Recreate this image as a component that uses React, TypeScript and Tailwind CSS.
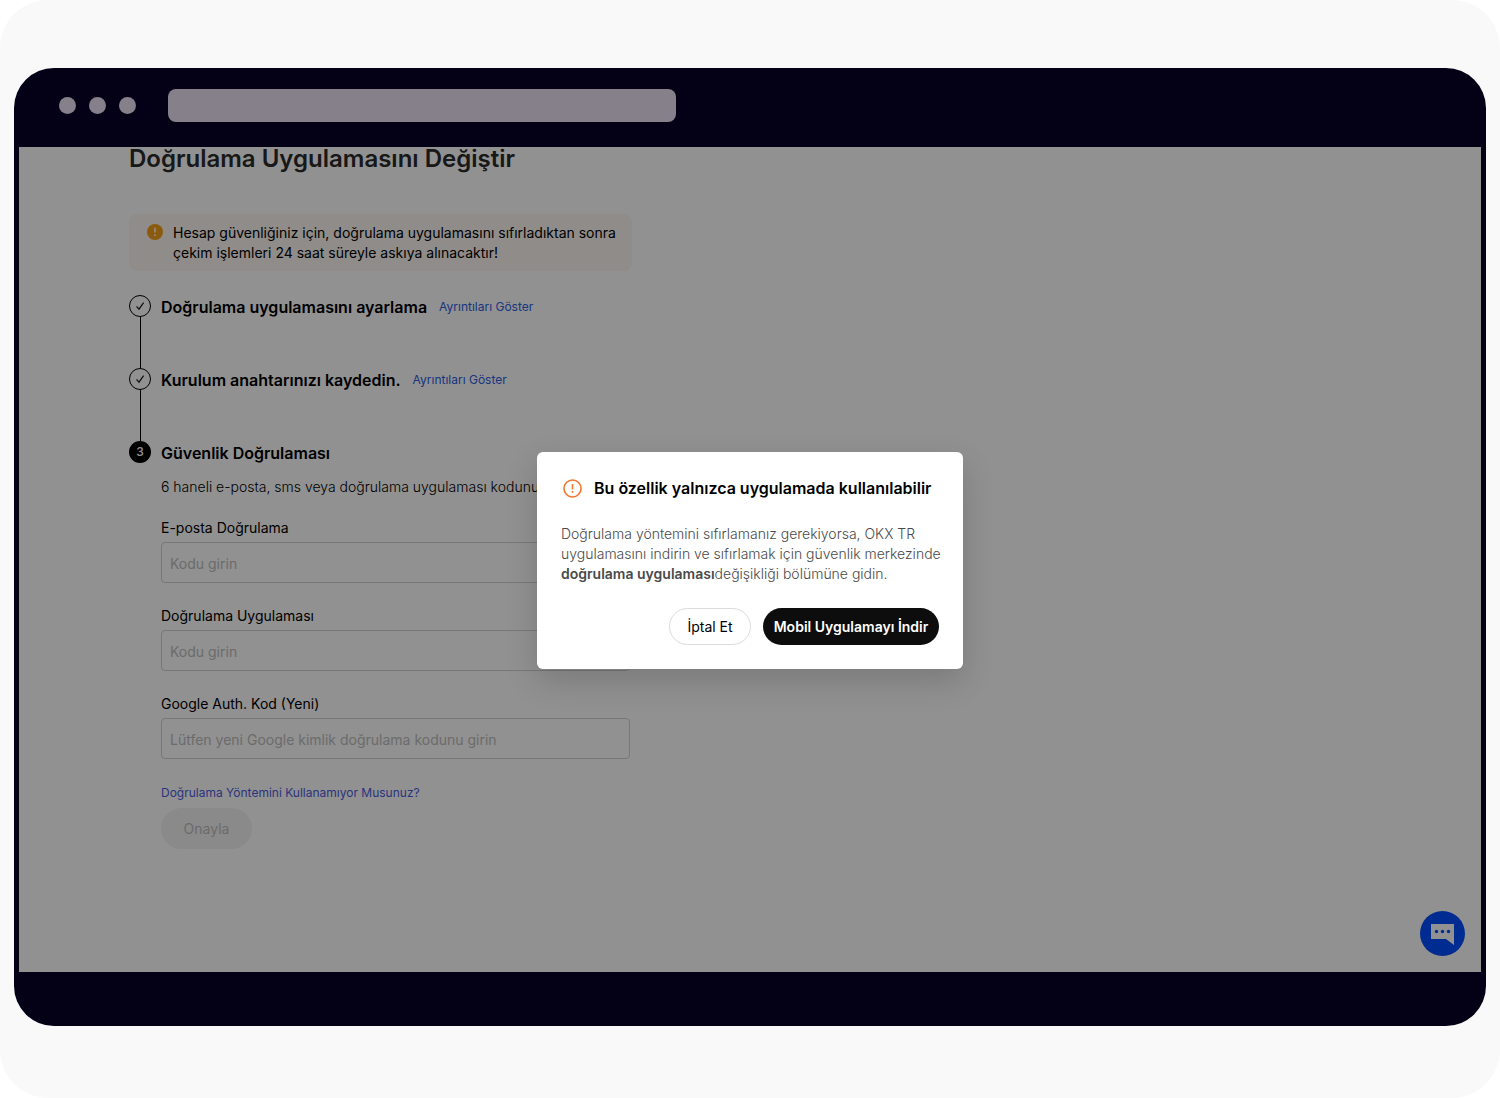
import React, { ReactNode } from "react";

interface StepProps {
    marker: ReactNode;
    title: string;
    action?: string;
    last?: boolean;
    children?: ReactNode;
}

interface FieldProps {
    id: string;
    label: string;
    placeholder: string;
}

const CheckMarker = () => (
    <span className="flex size-[22px] items-center justify-center rounded-full border border-black">
        <svg className="size-2.5" viewBox="0 0 10 10" fill="none" stroke="#1a1a1a" strokeWidth="1.2">
            <path d="M1.5 5.4 4 8.2 8.6 1.6" />
        </svg>
    </span>
);

const NumberMarker = ({ value }: { value: number }) => (
    <span className="flex size-[22px] items-center justify-center rounded-full bg-black text-xs font-medium text-white">
        {value}
    </span>
);

const Step = ({ marker, title, action, last, children }: StepProps) => (
    <li className={"flex gap-2.5 " + (last ? "" : "h-[73px]")}>
        <div className="flex flex-col items-center">
            {marker}
            {!last && <span className="w-px flex-1 bg-black" />}
        </div>
        <div className="flex-1">
            <div className="flex h-6 items-center gap-3">
                <h2 className="text-base font-semibold text-black">{title}</h2>
                {action && (
                    <a href="#" className="text-xs text-[#2d60e0]">
                        {action}
                    </a>
                )}
            </div>
            {children}
        </div>
    </li>
);

const Field = ({ id, label, placeholder }: FieldProps) => (
    <div className="mb-[23px] flex flex-col gap-1">
        <label htmlFor={id} className="text-sm leading-5 text-black">
            {label}
        </label>
        <input
            id={id}
            type="text"
            placeholder={placeholder}
            className="h-[41px] w-full rounded border border-[#d2d2d2] px-2 pt-0.5 text-sm placeholder:text-[#bdbdbd]"
        />
    </div>
);

const Modal = () => (
    <div className="absolute inset-0 flex items-center justify-center bg-black/43">
        <section
            role="dialog"
            aria-labelledby="modal-title"
            className="mt-0.5 w-[426px] rounded-md bg-white p-6 shadow-[0_12px_32px_rgba(0,0,0,0.16)]"
        >
            <header className="flex items-center gap-3 pl-0.5">
                <svg className="size-[19px]" viewBox="0 0 20 20" fill="none" stroke="#f5752f" strokeWidth="1.7">
                    <circle cx="10" cy="10" r="9" />
                    <path d="M10 5.2v5.8M10 12.6v2" />
                </svg>
                <h2 id="modal-title" className="text-base font-semibold text-black">
                    Bu özellik yalnızca uygulamada kullanılabilir
                </h2>
            </header>
            <p className="mt-6 text-sm font-light leading-5 whitespace-nowrap text-[#4a4a4a]">
                Doğrulama yöntemini sıfırlamanız gerekiyorsa, OKX TR
                <br />
                uygulamasını indirin ve sıfırlamak için güvenlik merkezinde
                <br />
                <strong className="font-semibold">doğrulama uygulaması</strong>değişikliği bölümüne gidin.
            </p>
            <footer className="mt-6 flex justify-end gap-3">
                <button className="h-[37px] w-[82px] rounded-full border border-[#dcdcdc] text-sm text-black">
                    İptal Et
                </button>
                <button className="h-[37px] w-44 rounded-full bg-[#0d0d0d] text-sm font-semibold whitespace-nowrap text-white">
                    Mobil Uygulamayı İndir
                </button>
            </footer>
        </section>
    </div>
);

const App = () => {
    return (
        <main className="min-h-screen bg-white font-['Inter','Noto_Sans',sans-serif]">
            <div className="flex min-h-screen flex-col rounded-[48px] bg-[#f9f9f9] px-3.5 pt-[68px] pb-[72px]">
                <div className="flex flex-1 flex-col rounded-[40px] bg-[#040016] px-[5px]">
                    {/* Browser bar */}
                    <header className="flex h-[79px] items-center pb-1 pl-10">
                        <div className="flex gap-[13px]">
                            <span className="size-[17px] rounded-full bg-[#858089]" />
                            <span className="size-[17px] rounded-full bg-[#858089]" />
                            <span className="size-[17px] rounded-full bg-[#858089]" />
                        </div>
                        <div className="ml-8 h-[33px] w-[508px] rounded-lg bg-[#858089]" />
                    </header>

                    {/* Page */}
                    <div className="relative flex-1 overflow-hidden bg-white">
                        <div className="w-[613px] pl-[110px]">
                            <h1 className="text-2xl leading-6 font-semibold whitespace-nowrap text-[#2b2b2b]">
                                Doğrulama Uygulamasını Değiştir
                            </h1>

                            <div className="mt-[43px] flex gap-2.5 rounded-lg bg-[#fcf7f3] px-[18px] pt-[9px] pb-2">
                                <svg className="mt-px size-4 shrink-0" viewBox="0 0 16 16">
                                    <circle cx="8" cy="8" r="8" fill="#f2a01c" />
                                    <path d="M8 3.8v4.8M8 10.2v1.8" stroke="#fff" strokeWidth="1.5" />
                                </svg>
                                <p className="text-sm leading-5 whitespace-nowrap text-black">
                                    Hesap güvenliğiniz için, doğrulama uygulamasını sıfırladıktan sonra
                                    <br />
                                    çekim işlemleri 24 saat süreyle askıya alınacaktır!
                                </p>
                            </div>

                            <ol className="mt-6">
                                <Step
                                    marker={<CheckMarker />}
                                    title="Doğrulama uygulamasını ayarlama"
                                    action="Ayrıntıları Göster"
                                />
                                <Step
                                    marker={<CheckMarker />}
                                    title="Kurulum anahtarınızı kaydedin."
                                    action="Ayrıntıları Göster"
                                />
                                <Step marker={<NumberMarker value={3} />} title="Güvenlik Doğrulaması" last>
                                    <p className="mt-3 mb-[21px] text-sm leading-5 font-light text-black">
                                        6 haneli e-posta, sms veya doğrulama uygulaması kodunu
                                    </p>
                                    <form className="pr-0.5">
                                        <Field id="email-code" label="E-posta Doğrulama" placeholder="Kodu girin" />
                                        <Field id="app-code" label="Doğrulama Uygulaması" placeholder="Kodu girin" />
                                        <Field
                                            id="google-code"
                                            label="Google Auth. Kod (Yeni)"
                                            placeholder="Lütfen yeni Google kimlik doğrulama kodunu girin"
                                        />
                                        <a href="#" className="block text-xs leading-[22px] text-[#4d5ce0]">
                                            Doğrulama Yöntemini Kullanamıyor Musunuz?
                                        </a>
                                        <button
                                            type="button"
                                            className="mt-1 h-[41px] w-[91px] rounded-full bg-[#f3f3f3] text-sm text-[#bdbdbd]"
                                        >
                                            Onayla
                                        </button>
                                    </form>
                                </Step>
                            </ol>
                        </div>

                        <button
                            aria-label="Chat"
                            className="absolute right-4 bottom-4 flex size-[45px] items-center justify-center rounded-full bg-[#004dff]"
                        >
                            <svg className="h-[22px] w-[23px]" viewBox="0 0 23 22">
                                <path d="M0 1h23v21l-8-6H0z" fill="#fff" />
                                <circle cx="5.5" cy="8.5" r="1.7" fill="#004dff" />
                                <circle cx="11.5" cy="8.5" r="1.7" fill="#004dff" />
                                <circle cx="17.5" cy="8.5" r="1.7" fill="#004dff" />
                            </svg>
                        </button>

                        <Modal />
                    </div>

                    <div className="h-[54px]" />
                </div>
            </div>
        </main>
    );
};

export default App;
